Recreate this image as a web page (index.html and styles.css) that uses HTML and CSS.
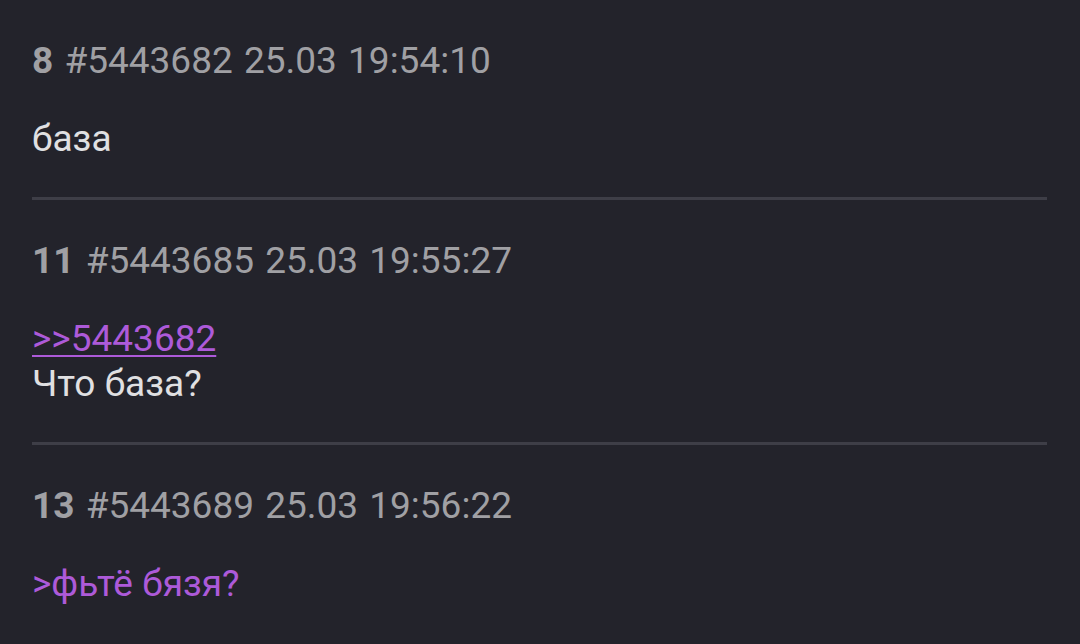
FILE: index.html
```html
<!DOCTYPE html>
<html lang="ru">
<head>
<meta charset="utf-8">
<link rel="stylesheet" href="styles.css">
</head>
<body>
<div class="thread">
  <article class="post">
    <div class="post-head"><span class="num">8</span> #5443682 25.03 19:54:10</div>
    <div class="post-body">база</div>
  </article>
  <article class="post">
    <div class="post-head"><span class="num">11</span> #5443685 25.03 19:55:27</div>
    <div class="post-body"><a class="reply" href="#">&gt;&gt;5443682</a><br>Что база?</div>
  </article>
  <article class="post">
    <div class="post-head"><span class="num">13</span> #5443689 25.03 19:56:22</div>
    <div class="post-body"><span class="quote">&gt;фьтё бязя?</span></div>
  </article>
</div>
</body>
</html>
```
FILE: styles.css
```css
html, body {
  margin: 0;
  padding: 0;
  background: #23232b;
  height: 100%;
  overflow: hidden;
}
body {
  font-family: Roboto, "Noto Sans", sans-serif;
  font-size: 37px;
  line-height: 45px;
  color: #e0e0e2;
}
.thread {
  padding: 0 33px 0 32px;
}
.post {
  padding: 38px 0 36px;
  border-bottom: 3px solid #3e3e47;
}
.post:last-child {
  border-bottom: none;
}
.post-head {
  color: #a0a0a4;
  margin-bottom: 33px;
  word-spacing: 2px;
}
.num {
  font-weight: 700;
}
.post-body {
  color: #e0e0e2;
}
.reply {
  color: #ad5ad9;
  text-decoration: underline;
  text-decoration-thickness: 2px;
  text-underline-offset: 4px;
}
.quote {
  color: #ad5ad9;
}
```
